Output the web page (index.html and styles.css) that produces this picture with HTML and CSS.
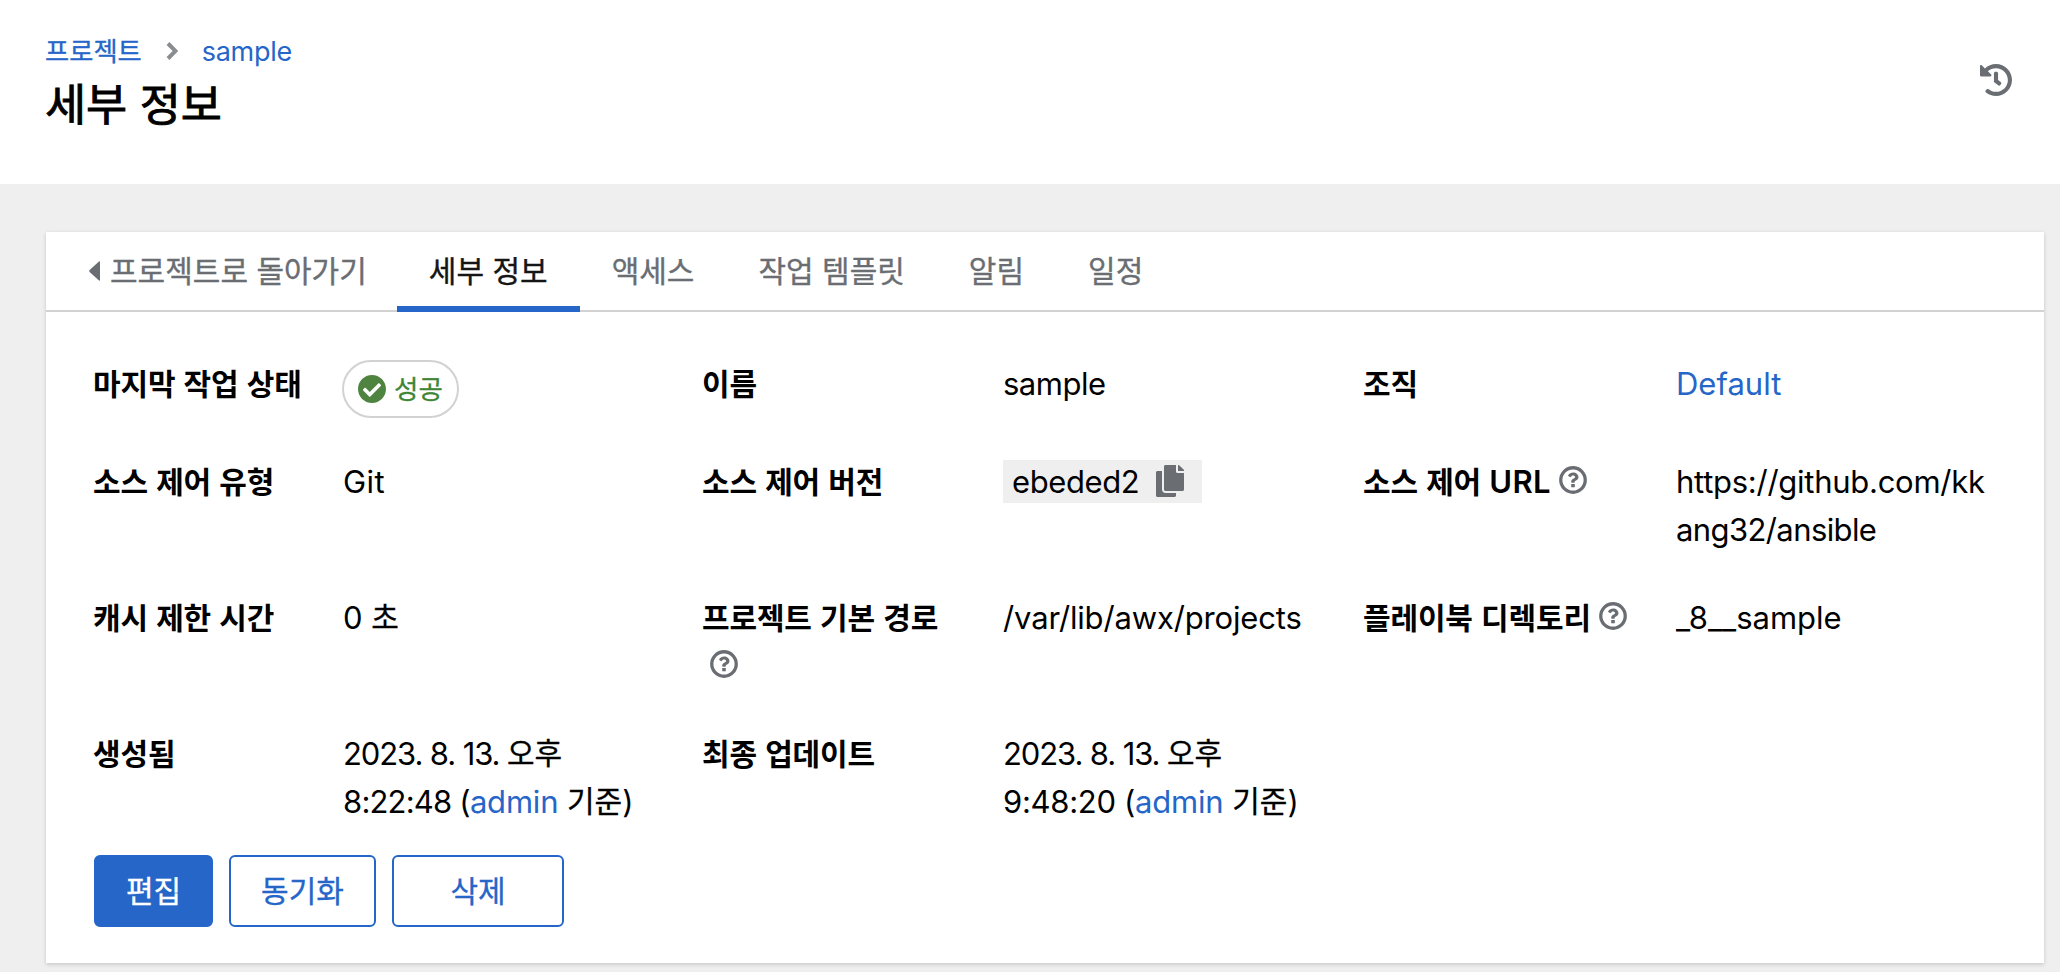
FILE: index.html
```html
<!DOCTYPE html>
<html lang="ko">
<head>
<meta charset="utf-8">
<title>세부 정보</title>
<link rel="stylesheet" href="styles.css">
</head>
<body>
<svg class="defs" width="0" height="0">
  <symbol id="help" viewBox="0 0 512 512"><circle cx="256" cy="256" r="224" fill="none" stroke="#6a6e73" stroke-width="60"/><path transform="translate(18 14) scale(.93)" d="M363.244 200.800c0 67.052-72.421 68.084-72.421 92.863V300c0 6.627-5.373 12-12 12h-45.647c-6.627 0-12-5.373-12-12v-8.659c0-35.745 27.1-50.034 47.579-61.516 17.561-9.845 28.324-16.541 28.324-29.579 0-17.246-21.999-28.693-39.784-28.693-23.189 0-33.894 10.977-48.942 29.969-4.057 5.12-11.46 6.071-16.666 2.124l-27.824-21.098c-5.107-3.872-6.251-11.066-2.644-16.363C184.846 131.491 214.94 112 261.794 112c49.071 0 101.45 38.304 101.45 88.8zM221 340h70v62h-70z"/></symbol>
</svg>
<header class="page-header">
  <div>
    <nav class="breadcrumb">
      <a class="ko-sm">프로젝트</a>
      <svg class="chevron" viewBox="0 0 12 18"><path d="M2 1.500l7.500 7.500-7.500 7.500" fill="none" stroke="#8a8d90" stroke-width="4"/></svg>
      <a class="crumb-name">sample</a>
    </nav>
    <h1 class="title">세부 정보</h1>
  </div>
  <svg class="history" viewBox="8 8 496 496"><path d="M504 255.531c.253 136.64-111.18 248.372-247.82 248.468-59.015.042-113.223-20.53-155.822-54.911-11.077-8.94-11.905-25.541-1.839-35.607l11.267-11.267c8.609-8.609 22.353-9.551 31.891-1.984C173.062 425.135 212.781 440 256 440c101.705 0 184-82.311 184-184 0-101.705-82.311-184-184-184-48.814 0-93.149 18.969-126.068 49.932l50.754 50.754c10.08 10.08 2.941 27.314-11.313 27.314H24c-8.837 0-16-7.163-16-16V38.627c0-14.254 17.234-21.393 27.314-11.314l49.372 49.372C129.209 34.136 189.552 8 256 8c136.81 0 247.747 110.78 248 247.531zm-180.912 78.784l9.823-12.63c8.138-10.463 6.253-25.542-4.21-33.679L288 256.349V152c0-13.255-10.745-24-24-24h-16c-13.255 0-24 10.745-24 24v135.651l65.409 50.874c10.463 8.137 25.541 6.253 33.679-4.21z"/></svg>
</header>
<main class="card">
  <nav class="tabs">
    <a class="tab tab-back"><svg class="caret" viewBox="0 0 11 20"><path d="M11 1v18q0 1-1 .6L.6 11Q-.2 10 .6 9L10 .4q1-.4 1 .6z"/></svg>프로젝트로 돌아가기</a>
    <a class="tab tab-current">세부 정보</a>
    <a class="tab">액세스</a>
    <a class="tab">작업 템플릿</a>
    <a class="tab">알림</a>
    <a class="tab">일정</a>
  </nav>
  <dl class="details">
    <dt>마지막 작업 상태</dt>
    <dd><span class="status"><svg viewBox="8 8 496 496"><path d="M504 256c0 136.967-111.033 248-248 248S8 392.967 8 256 119.033 8 256 8s248 111.033 248 248zM227.314 387.314l184-184c6.248-6.248 6.248-16.379 0-22.627l-22.627-22.627c-6.248-6.249-16.379-6.249-22.628 0L216 308.118l-70.059-70.059c-6.248-6.248-16.379-6.248-22.628 0l-22.627 22.627c-6.248 6.248-6.248 16.379 0 22.627l104 104c6.249 6.249 16.379 6.249 22.628.001z"/></svg><span class="status-text">성공</span></span></dd>
    <dt>이름</dt>
    <dd class="name">sample</dd>
    <dt>조직</dt>
    <dd><a>Default</a></dd>

    <dt>소스 제어 유형</dt>
    <dd class="type">Git</dd>
    <dt>소스 제어 버전</dt>
    <dd><span class="revision"><span class="hash">ebeded2</span><svg viewBox="0 0 448 512"><path d="M320 448v40c0 13.255-10.745 24-24 24H24c-13.255 0-24-10.745-24-24V120c0-13.255 10.745-24 24-24h72v296c0 30.879 25.121 56 56 56h168zm0-344V0H152c-13.255 0-24 10.745-24 24v368c0 13.255 10.745 24 24 24h272c13.255 0 24-10.745 24-24V128H344c-13.2 0-24-10.8-24-24zm120.971-31.029L375.029 7.029A24 24 0 0 0 358.059 0H352v96h96v-6.059a24 24 0 0 0-7.029-16.97z"/></svg></span></dd>
    <dt>소스 제어 <span class="latin-bold">URL</span><svg class="help"><use href="#help"/></svg></dt>
    <dd class="url">https://github.com/kk<br><span class="url-rest">ang32/ansible</span></dd>

    <dt>캐시 제한 시간</dt>
    <dd>0 <span class="ko">초</span></dd>
    <dt>프로젝트 기본 경로<br><svg class="help"><use href="#help"/></svg></dt>
    <dd class="path">/var/lib/awx/projects</dd>
    <dt>플레이북 디렉토리<svg class="help"><use href="#help"/></svg></dt>
    <dd>_8__sample</dd>

    <dt>생성됨</dt>
    <dd><span class="date">2023. 8. 13. </span><span class="ko">오후</span><br><span class="time-created">8:22:48 (</span><a class="user">admin</a> <span class="ko">기준</span>)</dd>
    <dt>최종 업데이트</dt>
    <dd><span class="date">2023. 8. 13. </span><span class="ko">오후</span><br><span class="time-updated">9:48:20 (</span><a class="user">admin</a> <span class="ko">기준</span>)</dd>
  </dl>
  <div class="actions">
    <button class="button button-primary">편집</button>
    <button class="button button-sync">동기화</button>
    <button class="button button-delete">삭제</button>
  </div>
</main>
</body>
</html>
```
FILE: styles.css
```css
* { box-sizing: border-box; }
body {
  margin: 0;
  height: 972px;
  overflow: hidden;
  background: #efefef;
  color: #000;
  font-family: Inter, "Noto Sans CJK KR", sans-serif;
  font-size: 31px;
  line-height: 48px;
}
a { color: #2566c8; }
svg { fill: #6a6e73; flex: none; }
.defs { display: none; }
.page-header {
  display: flex;
  justify-content: space-between;
  height: 184px;
  padding: 30px 48px 0 45px;
  background: #fff;
}
.breadcrumb { display: flex; align-items: center; height: 42px; font-size: 27px; }
.ko-sm {
  padding-bottom: 2px;
  font: 26.3px/40px "Noto Sans CJK KR", sans-serif;
  -webkit-text-stroke: .3px;
}
.chevron { width: 12px; height: 18px; margin: 0 24px; }
.crumb-name { padding-top: 2px; letter-spacing: -.3px; }
.title {
  margin: -1px 0 0;
  font: 400 44.7px/62px "Noto Sans CJK KR", sans-serif;
  -webkit-text-stroke: .9px;
}
.history { width: 32px; height: 32px; margin-top: 34px; }
.card {
  width: 1998px;
  height: 731px;
  margin: 48px 0 0 46px;
  background: #fff;
  box-shadow: 0 2px 4px rgba(3,3,3,.12), 0 0 4px rgba(3,3,3,.06);
}
.tabs {
  display: flex;
  height: 80px;
  padding-left: 11px;
  border-bottom: 2px solid #d2d2d2;
  font: 30px/74px "Noto Sans CJK KR", sans-serif;
  -webkit-text-stroke: .35px;
}
.tab { display: flex; height: 80px; padding: 0 32px; color: #6a6e73; white-space: nowrap; }
.tab-back { padding-right: 30px; }
.tab-current { color: #151515; box-shadow: inset 0 -6px #2566c8; }
.caret { width: 11px; height: 20px; margin: 29px 10px 0 0; }
.details {
  display: grid;
  grid-template-columns: 249px 360px 300px 361px 312px 320px;
  grid-template-rows: 58px 96px 96px 96px;
  row-gap: 40px;
  margin: 0;
  padding: 48px 0 0 48px;
  white-space: nowrap;
}
dt {
  margin: -2px 0 0 -1px;
  font: 700 30px/48px "Noto Sans CJK KR", sans-serif;
  letter-spacing: -.15px;
}
dd { margin: 0; }
.ko {
  font: 30px/1 "Noto Sans CJK KR", sans-serif;
  letter-spacing: 0;
  vertical-align: 1px;
  -webkit-text-stroke: .3px;
}
.latin-bold { font: 600 31px/1 Inter, sans-serif; letter-spacing: .3px; }
.name { letter-spacing: -.5px; }
.type { letter-spacing: .4px; }
.hash { letter-spacing: -.4px; }
.url { letter-spacing: -.27px; }
.url-rest { letter-spacing: -.6px; }
.path { letter-spacing: -.15px; }
.date { letter-spacing: -1.1px; }
.time-created { letter-spacing: -.8px; }
.time-updated { letter-spacing: -.3px; }
.user { letter-spacing: -.2px; }
.status {
  display: flex;
  align-items: center;
  width: 117px;
  height: 58px;
  margin-left: -1px;
  padding-left: 14px;
  border: 2px solid #d2d2d2;
  border-radius: 30px;
}
.status-text {
  padding-bottom: 2px;
  color: #3e8635;
  font: 26.5px/52px "Noto Sans CJK KR", sans-serif;
  -webkit-text-stroke: .3px;
}
.status svg { width: 28px; height: 28px; margin-right: 8px; fill: #4f8440; }
.revision {
  display: flex;
  align-items: center;
  width: 199px;
  height: 43px;
  margin-top: 2px;
  padding: 0 18px 0 9px;
  justify-content: space-between;
  background: #efefef;
}
.revision svg { width: 28px; height: 32px; margin-top: -1px; }
.help { width: 28px; height: 28px; margin-left: 8px; vertical-align: -1px; }
.actions { display: flex; gap: 16px; padding: 29px 0 0 48px; }
.button {
  height: 72px;
  padding: 0 0 4px;
  border: 2px solid #2566c8;
  border-radius: 6px;
  background: #fff;
  color: #2566c8;
  font: 30px/64px "Noto Sans CJK KR", sans-serif;
  -webkit-text-stroke: .35px;
}
.button-primary { width: 119px; background: #2566c8; color: #fff; }
.button-sync { width: 147px; }
.button-delete { width: 172px; }
```
